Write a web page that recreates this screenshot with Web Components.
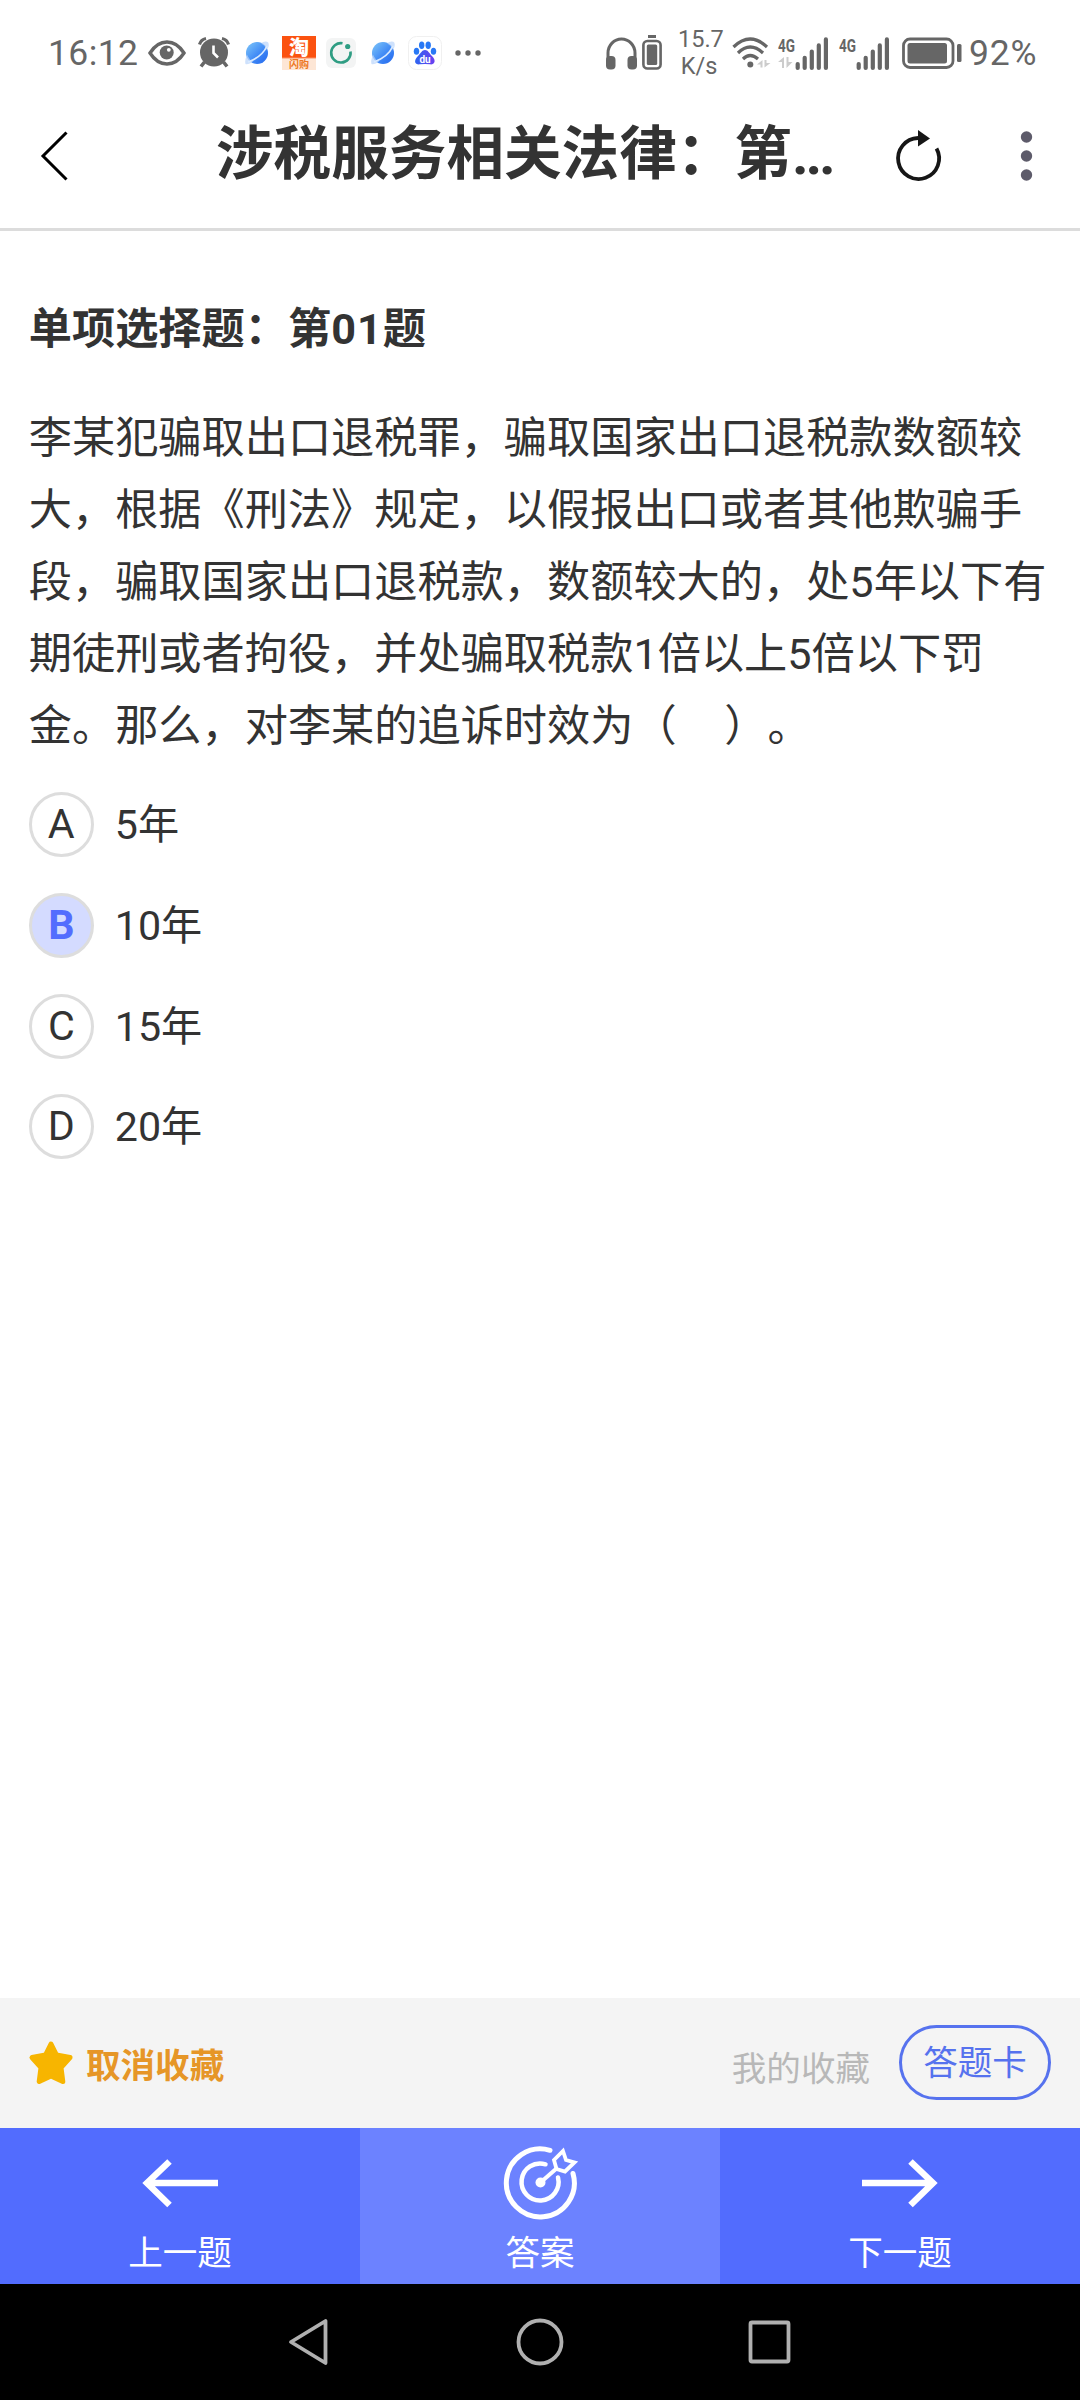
<!DOCTYPE html>
<html lang="zh-CN">
<head>
<meta charset="utf-8">
<meta name="viewport" content="width=device-width">
<title>涉税服务相关法律</title>
<style>
  html, body {
    margin: 0;
    height: 100%;
  }
  body {
    background: #fff;
    color: #333;
    font-family: Roboto, "Noto Sans CJK SC", sans-serif;
    text-spacing-trim: space-all;
  }
</style>
</head>
<body>
<quiz-app></quiz-app>

<script>
// every icon: [width, height, svg content]
const planet = `
  <circle cx="12" cy="12" r="11" fill="url(#p)"/>
  <path d="M18 1 Q25 -1 23.500 6 Q18 15 9 20 Q3 24 0.500 23 Q-.5 20 1.500 15" fill="#b9d4fb" opacity=".7"/>
  <circle cx="12" cy="11.500" r="10" fill="url(#p)"/>
  <path d="M22 5Q17 16 3 21" fill="none" stroke="#d9eaff" stroke-width="1.800"/>
  <defs><linearGradient id="p" x1="0" y1="0" x2="1" y2="1"><stop offset="0" stop-color="#7cc4f8"/><stop offset=".55" stop-color="#428cf6"/><stop offset="1" stop-color="#2468ee"/></linearGradient></defs>`;

const bars = `
  <path d="M2.200 28v4M9.200 21.800V32M16.300 15.600V32M23.300 9.400V32M30.400 3.400V32" stroke="#666" stroke-width="4.200" stroke-linecap="round"/>`;

const icons = {
  eye: [38, 26, `
    <path d="M2 13Q9 2 19 2T36 13Q29 24 19 24T2 13Z" fill="none" stroke="#666" stroke-width="3.400"/>
    <circle cx="18.700" cy="12.500" r="7" fill="#666"/><circle cx="20.800" cy="9.800" r="1.900" fill="#fff"/>`],
  alarm: [32, 31, `
    <circle cx="16" cy="15.500" r="14" fill="#666"/>
    <path d="M1.500 7.500Q3 2.500 8 1.500M30.500 7.500Q29 2.500 24 1.500" fill="none" stroke="#666" stroke-width="3.200"/>
    <path d="M6.500 25L3 29.500M25.500 25L29 29.500" stroke="#666" stroke-width="3.600"/>
    <path d="M15.500 8.500V16L20 20.500" fill="none" stroke="#fff" stroke-width="2.600"/>`],
  planet: [24, 24, planet],
  ring: [30, 30, `
    <rect width="30" height="30" rx="6" fill="#f3f4f4"/>
    <path d="M16.500 5.300A9.700 9.700 0 1 0 24.500 13.500" fill="none" stroke="#2f9d83" stroke-width="2.600"/>
    <circle cx="21.700" cy="8.500" r="2.600" fill="#2f9d83"/>`],
  paw: [34, 34, `
    <rect x=".5" y=".5" width="33" height="33" rx="8" fill="#fff" stroke="#f0f0f0"/>
    <g fill="#2878f5"><ellipse cx="8.500" cy="15.200" rx="2.700" ry="3.500"/><ellipse cx="13.700" cy="9.200" rx="2.700" ry="3.700"/><ellipse cx="20.200" cy="9.200" rx="2.700" ry="3.700"/><ellipse cx="25.500" cy="15.200" rx="2.700" ry="3.500"/></g>
    <path d="M17 14C20 14 21 17 24 20C29 25 26 29 22 28.300Q17 27.500 12 28.300C7 29 5 25 10 20C13 17 14 14 17 14Z" fill="url(#d)"/>
    <text x="17" y="26.500" font-size="10" font-weight="700" text-anchor="middle" fill="#fff">du</text>
    <defs><linearGradient id="d"><stop offset="0" stop-color="#2d65f0"/><stop offset="1" stop-color="#6a3ff0"/></linearGradient></defs>`],
  dots: [26, 6, `<g fill="#666"><circle cx="3" cy="3" r="2.700"/><circle cx="13" cy="3" r="2.700"/><circle cx="23" cy="3" r="2.700"/></g>`],
  headphones: [31, 34, `
    <path d="M2 26V17A13.500 14 0 0 1 29 17V26" fill="none" stroke="#666" stroke-width="3"/>
    <rect x="0" y="20" width="9.500" height="13.500" rx="4" fill="#666"/><rect x="21.500" y="20" width="9.500" height="13.500" rx="4" fill="#666"/>`],
  device: [20, 35, `
    <rect x="6" y="0" width="8" height="3" fill="#666"/>
    <rect x="1.400" y="6" width="17.200" height="27.500" rx="4" fill="none" stroke="#666" stroke-width="2.600"/>
    <rect x="4.800" y="9.500" width="10.400" height="20.500" rx="1.500" fill="#666"/>`],
  wifi: [40, 34, `
    <path d="M1.500 11Q18 -5 35 11M6 17Q18 5 31 17M11 23Q18 16 26 23" fill="none" stroke="#666" stroke-width="3.200"/>
    <circle cx="18.300" cy="28.500" r="3" fill="#666"/>
    <path d="M30.500 24v7.500h-2v-3h-3.500zM32.500 24v7.500l6-4.500h-4v-3z" fill="#ccc"/>`],
  signal: [51, 34, `
    <text x="0" y="16" font-size="19" font-weight="700" fill="#666" textLength="17" lengthAdjust="spacingAndGlyphs">4G</text>
    <path d="M6 21v11H4v-6H0zM8.500 21v11l6-6h-4v-5z" fill="#ccc"/>
    <g transform="translate(17.500 0)">${bars}</g>`],
  signal2: [51, 34, `
    <text x="0" y="16" font-size="19" font-weight="700" fill="#666" textLength="17" lengthAdjust="spacingAndGlyphs">4G</text>
    <g transform="translate(17.500 0)">${bars}</g>`],
  battery: [60, 32, `
    <rect x="1.500" y="2" width="49.500" height="28.500" rx="6.500" fill="none" stroke="#666" stroke-width="2.800"/>
    <rect x="5.500" y="6" width="39.500" height="20.500" rx="2.500" fill="#666"/>
    <rect x="55" y="7" width="4.500" height="18" rx="1.500" fill="#666"/>`],
  back: [27, 50, `<path d="M25.500 1.500L2 25L25.500 48.500" fill="none" stroke="#000" stroke-width="3"/>`],
  refresh: [46, 52, `
    <path d="M23 8A20.500 20.500 0 1 0 41.500 18.500" fill="none" stroke="#161616" stroke-width="3.800"/>
    <path d="M23 0L35 8.500L23 16.500Z" fill="#161616"/>`],
  more: [12, 50, `<g fill="#5d5b6a"><circle cx="5.500" cy="6" r="5.700"/><circle cx="5.500" cy="25" r="5.700"/><circle cx="5.500" cy="44" r="5.700"/></g>`],
  star: [44, 43, `<path d="M22 3L27.500 14L41 16.500L32 26.500L33.800 40.500L22 35L10.200 40.500L12 26.500L3 16.500L16.500 14Z" fill="#f7b500" stroke="#f7b500" stroke-width="5" stroke-linejoin="round"/>`],
  prev: [76, 74, `<path d="M76 37H6M27.500 15.500L5 37L27.500 59" fill="none" stroke="#fff" stroke-width="6.500"/>`],
  next: [76, 74, `<path d="M0 37H70M48.500 15.500L71 37L48.500 59" fill="none" stroke="#fff" stroke-width="6.500"/>`],
  target: [76, 74, `
    <g fill="none" stroke="#fff" stroke-width="5" stroke-linecap="round" transform="translate(.5 -.5)">
      <path d="M47.500 4.800A34 34 0 1 0 70.500 28"/>
      <path d="M43 18.800A18.500 18.500 0 1 0 55.500 32" stroke-width="4.500"/>
      <path d="M38 37L54 23" stroke-width="4"/>
      <path d="M60.500 5.500L63.500 14.500L72 17L62.500 26L54 23.500L51.500 14.500Z" stroke-width="3.800" stroke-linecap="butt"/>
    </g>
    <circle cx="38.500" cy="36.500" r="5" fill="#fff"/>`],
  navBack: [48, 48, `<path d="M38.500 3V45L4 24Z" fill="none" stroke="#b0b0b0" stroke-width="3.800" stroke-linejoin="round"/>`],
  navHome: [48, 48, `<circle cx="24" cy="24" r="21.500" fill="none" stroke="#b0b0b0" stroke-width="3.800"/>`],
  navRecent: [48, 48, `<rect x="4.500" y="4.500" width="38" height="39" rx="1.500" fill="none" stroke="#b0b0b0" stroke-width="3.800"/>`],
};

function attach(el, html) {
  const template = document.createElement('template');
  template.innerHTML = html;
  el.attachShadow({ mode: 'open' }).appendChild(template.content.cloneNode(true));
}

class UiIcon extends HTMLElement {
  connectedCallback() {
    const [w, h, body] = icons[this.getAttribute('name')];
    attach(this, `
      <style>
        :host { display: block; flex: none; }
        svg { display: block; overflow: visible; }
      </style>
      <svg width="${w}" height="${h}" viewBox="0 0 ${w} ${h}" aria-hidden="true">${body}</svg>
    `);
  }
}

class StatusBar extends HTMLElement {
  connectedCallback() {
    attach(this, `
      <style>
        :host {
          display: flex;
          justify-content: space-between;
          box-sizing: border-box;
          height: 105px;
          padding: 0 41px 0 48px;
          color: #666;
        }
        .group { display: flex; align-items: center; }
        .time { width: 100px; font-size: 35.500px; letter-spacing: .4px; white-space: nowrap; }
        .shop {
          width: 34px;
          height: 34px;
          margin: 0 10px 0 13px;
          background: linear-gradient(#fb5210 62%, #fde6d5 68%);
          color: #fff;
          font-weight: 700;
          text-align: center;
        }
        .shop b { display: block; font-size: 20px; line-height: 24px; }
        .shop i { display: block; color: #ee7722; font-size: 10px; line-height: 10px; font-style: normal; }
        .speed { width: 42px; margin: 0 12px 0 16px; font-size: 23.500px; line-height: 27px; text-align: center; }
        .percent { width: 70px; font-size: 35.500px; letter-spacing: .8px; white-space: nowrap; }
      </style>
      <div class="group">
        <span class="time">16:12</span>
        <ui-icon name="eye"></ui-icon>
        <ui-icon name="alarm" style="margin:0 15px 0 12px"></ui-icon>
        <ui-icon name="planet"></ui-icon>
        <div class="shop"><b>淘</b><i>闪购</i></div>
        <ui-icon name="ring"></ui-icon>
        <ui-icon name="planet" style="margin:0 13px 0 15px"></ui-icon>
        <ui-icon name="paw"></ui-icon>
        <ui-icon name="dots" style="margin-left:13px"></ui-icon>
      </div>
      <div class="group">
        <ui-icon name="headphones"></ui-icon>
        <ui-icon name="device" style="margin-left:5px"></ui-icon>
        <span class="speed">15.7 K/s</span>
        <ui-icon name="wifi"></ui-icon>
        <ui-icon name="signal" style="margin:0 10px 0 6px"></ui-icon>
        <ui-icon name="signal2"></ui-icon>
        <ui-icon name="battery" style="margin:0 7px 0 12px"></ui-icon>
        <span class="percent">92%</span>
      </div>
    `);
  }
}

class TitleBar extends HTMLElement {
  connectedCallback() {
    attach(this, `
      <style>
        :host {
          display: flex;
          align-items: center;
          box-sizing: border-box;
          height: 126px;
          padding: 0 47px 22px 41px;
          border-bottom: 3px solid #dcdcdc;
        }
        h1 {
          flex: 1;
          margin: 0 0 1px 148px;
          font-size: 57.600px;
          font-weight: 700;
          line-height: 80px;
          white-space: nowrap;
        }
        .tail { letter-spacing: -3.200px; }
      </style>
      <ui-icon name="back"></ui-icon>
      <h1><slot></slot><span class="tail">...</span></h1>
      <ui-icon name="refresh" style="margin-right:80px"></ui-icon>
      <ui-icon name="more"></ui-icon>
    `);
  }
}

class QuizOption extends HTMLElement {
  connectedCallback() {
    attach(this, `
      <style>
        :host {
          display: flex;
          align-items: center;
          gap: 21px;
          height: 65px;
          font-size: 41.200px;
          line-height: 65px;
        }
        .key {
          box-sizing: border-box;
          width: 65px;
          height: 65px;
          border: 3px solid #ddd;
          border-radius: 50%;
          line-height: 59px;
          text-align: center;
        }
        .text { padding-top: 2px; }
        :host([selected]) .key {
          background: #d4dbff;
          color: #536dfe;
          font-weight: 700;
        }
      </style>
      <span class="key">${this.getAttribute('key')}</span>
      <span class="text"><slot></slot></span>
    `);
  }
}

class QuizQuestion extends HTMLElement {
  connectedCallback() {
    attach(this, `
      <style>
        :host {
          display: block;
          flex: 1;
          padding: 63px 28.800px 0;
          font-size: 43.200px;
          line-height: 72px;
        }
        h2 { margin: 0 0 37px; font-size: inherit; }
        h2 span { letter-spacing: 1px; }
        p { margin: 0 0 29px; }
        .options { display: grid; gap: 35.800px; }
      </style>
      <h2>单项选择题：第<span>01</span>题</h2>
      <p>李某犯骗取出口退税罪，骗取国家出口退税款数额较大，根据《刑法》规定，以假报出口或者其他欺骗手段，骗取国家出口退税款，数额较大的，处5年以下有期徒刑或者拘役，并处骗取税款1倍以上5倍以下罚金。那么，对李某的追诉时效为（&#x3000;&hairsp;）。</p>
      <div class="options"><slot></slot></div>
    `);
  }
}

class FavoriteBar extends HTMLElement {
  connectedCallback() {
    attach(this, `
      <style>
        :host {
          display: flex;
          align-items: center;
          box-sizing: border-box;
          height: 130px;
          padding: 0 29px 0 29px;
          background: #f4f4f4;
          font-size: 34.560px;
          line-height: 50px;
        }
        .cancel { flex: 1; margin: 5px 0 0 13px; color: #e69627; font-weight: 700; }
        .mine { margin: 12px 29px 0 0; color: #b8b8b8; }
        .card {
          box-sizing: border-box;
          width: 152px;
          height: 75px;
          margin-bottom: 1px;
          border: 3px solid #5672ee;
          border-radius: 38px;
          color: #5672ee;
          line-height: 70px;
          text-align: center;
        }
      </style>
      <ui-icon name="star" style="margin-bottom:1px"></ui-icon>
      <span class="cancel">取消收藏</span>
      <span class="mine">我的收藏</span>
      <span class="card">答题卡</span>
    `);
  }
}

class ActionButton extends HTMLElement {
  connectedCallback() {
    attach(this, `
      <style>
        :host {
          display: flex;
          flex-direction: column;
          align-items: center;
          gap: 8px;
          box-sizing: border-box;
          height: 156px;
          padding-top: 18px;
          background: #526cfe;
          color: #fff;
          font-size: 34.560px;
          line-height: 50px;
        }
        :host([light]) { background: #6c82ff; }
      </style>
      <ui-icon name="${this.getAttribute('icon')}"></ui-icon>
      <span><slot></slot></span>
    `);
  }
}

class SystemNav extends HTMLElement {
  connectedCallback() {
    attach(this, `
      <style>
        :host {
          display: flex;
          justify-content: center;
          align-items: center;
          gap: 181.500px;
          height: 116px;
          background: #000;
        }
      </style>
      <ui-icon name="navBack"></ui-icon>
      <ui-icon name="navHome"></ui-icon>
      <ui-icon name="navRecent"></ui-icon>
    `);
  }
}

class QuizApp extends HTMLElement {
  connectedCallback() {
    attach(this, `
      <style>
        :host {
          display: flex;
          flex-direction: column;
          height: 2400px;
          overflow: hidden;
        }
        .actions { display: grid; grid-template-columns: repeat(3, 1fr); }
      </style>
      <status-bar></status-bar>
      <title-bar>涉税服务相关法律：第</title-bar>
      <quiz-question>
        <quiz-option key="A">5年</quiz-option>
        <quiz-option key="B" selected>10年</quiz-option>
        <quiz-option key="C">15年</quiz-option>
        <quiz-option key="D">20年</quiz-option>
      </quiz-question>
      <favorite-bar></favorite-bar>
      <div class="actions">
        <action-button icon="prev">上一题</action-button>
        <action-button icon="target" light>答案</action-button>
        <action-button icon="next">下一题</action-button>
      </div>
      <system-nav></system-nav>
    `);
  }
}

customElements.define('ui-icon', UiIcon);
customElements.define('status-bar', StatusBar);
customElements.define('title-bar', TitleBar);
customElements.define('quiz-option', QuizOption);
customElements.define('quiz-question', QuizQuestion);
customElements.define('favorite-bar', FavoriteBar);
customElements.define('action-button', ActionButton);
customElements.define('system-nav', SystemNav);
customElements.define('quiz-app', QuizApp);
</script>
</body>
</html>
